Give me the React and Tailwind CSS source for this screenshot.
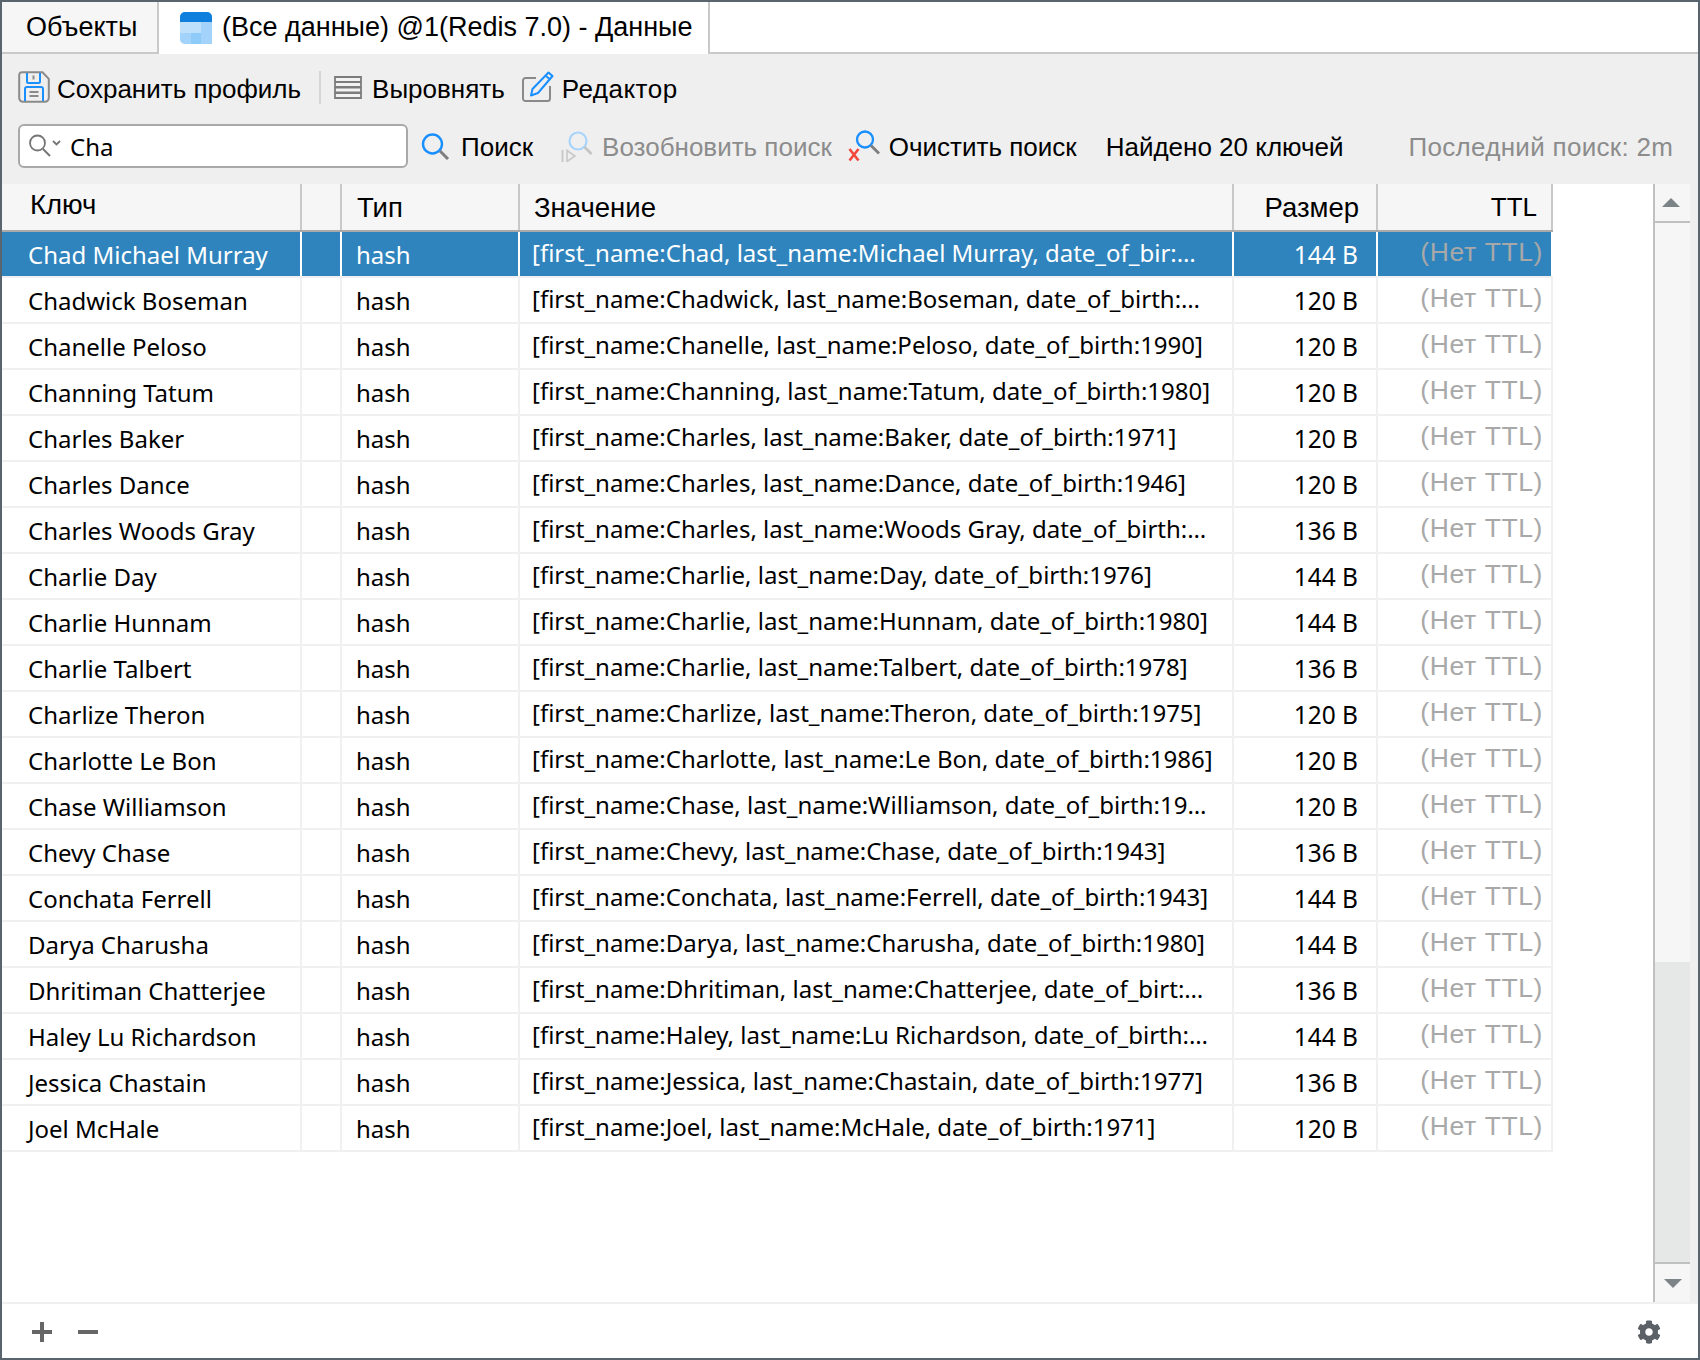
import React from "react";
import { FaCog } from "react-icons/fa";

const rows = [
  ["Chad Michael Murray", "[first_name:Chad, last_name:Michael Murray, date_of_bir:…", "144 B"],
  ["Chadwick Boseman", "[first_name:Chadwick, last_name:Boseman, date_of_birth:…", "120 B"],
  ["Chanelle Peloso", "[first_name:Chanelle, last_name:Peloso, date_of_birth:1990]", "120 B"],
  ["Channing Tatum", "[first_name:Channing, last_name:Tatum, date_of_birth:1980]", "120 B"],
  ["Charles Baker", "[first_name:Charles, last_name:Baker, date_of_birth:1971]", "120 B"],
  ["Charles Dance", "[first_name:Charles, last_name:Dance, date_of_birth:1946]", "120 B"],
  ["Charles Woods Gray", "[first_name:Charles, last_name:Woods Gray, date_of_birth:…", "136 B"],
  ["Charlie Day", "[first_name:Charlie, last_name:Day, date_of_birth:1976]", "144 B"],
  ["Charlie Hunnam", "[first_name:Charlie, last_name:Hunnam, date_of_birth:1980]", "144 B"],
  ["Charlie Talbert", "[first_name:Charlie, last_name:Talbert, date_of_birth:1978]", "136 B"],
  ["Charlize Theron", "[first_name:Charlize, last_name:Theron, date_of_birth:1975]", "120 B"],
  ["Charlotte Le Bon", "[first_name:Charlotte, last_name:Le Bon, date_of_birth:1986]", "120 B"],
  ["Chase Williamson", "[first_name:Chase, last_name:Williamson, date_of_birth:19…", "120 B"],
  ["Chevy Chase", "[first_name:Chevy, last_name:Chase, date_of_birth:1943]", "136 B"],
  ["Conchata Ferrell", "[first_name:Conchata, last_name:Ferrell, date_of_birth:1943]", "144 B"],
  ["Darya Charusha", "[first_name:Darya, last_name:Charusha, date_of_birth:1980]", "144 B"],
  ["Dhritiman Chatterjee", "[first_name:Dhritiman, last_name:Chatterjee, date_of_birt:…", "136 B"],
  ["Haley Lu Richardson", "[first_name:Haley, last_name:Lu Richardson, date_of_birth:…", "144 B"],
  ["Jessica Chastain", "[first_name:Jessica, last_name:Chastain, date_of_birth:1977]", "136 B"],
  ["Joel McHale", "[first_name:Joel, last_name:McHale, date_of_birth:1971]", "120 B"],
];

const TableIcon = () => (
  <svg width="32" height="32" viewBox="0 0 32 32" className="shrink-0">
    <rect width="32" height="32" rx="5" fill="#bfe0fb" />
    <path d="M0 10V5a5 5 0 0 1 5-5h22a5 5 0 0 1 5 5v5z" fill="#0e7fdc" />
    <rect x="21" y="10" width="11" height="22" fill="#a3d3fa" />
    <path d="M0 21h32v6a5 5 0 0 1-5 5H5a5 5 0 0 1-5-5z" fill="#a3d3fa" />
    <rect x="11" y="21" width="10" height="11" fill="#8ecbf9" />
  </svg>
);

const SaveIcon = () => (
  <svg width="32" height="32" viewBox="0 0 32 32" fill="none" className="shrink-0">
    <path d="M4 1.2h20.5l6.3 6.6V27a3.8 3.8 0 0 1-3.8 3.8H5A3.8 3.8 0 0 1 1.2 27V4A2.800 2.800 0 0 1 4 1.200z" stroke="#8a8a8a" strokeWidth="2" />
    <path d="M9 2v8.500a1.500 1.500 0 0 0 1.500 1.500h10a1.500 1.500 0 0 0 1.500-1.500V2" stroke="#1a8fff" strokeWidth="2" />
    <path d="M15.500 4.500v4" stroke="#8a8a8a" strokeWidth="2" />
    <path d="M7 30V18a2 2 0 0 1 2-2h14a2 2 0 0 1 2 2v12" stroke="#1a8fff" strokeWidth="2" />
    <path d="M11.500 21h9M11.500 25h9" stroke="#8a8a8a" strokeWidth="2" />
  </svg>
);

const AlignIcon = () => (
  <svg width="28" height="23" viewBox="0 0 28 23" fill="none" className="shrink-0">
    <path d="M1 1h26v5H1zM1 6h26v5H1zM1 11.500h26v5H1zM1 17h26v5H1z" stroke="#7c7c7c" strokeWidth="1.800" fill="#f2f2f2" />
  </svg>
);

const EditIcon = () => (
  <svg width="32" height="32" viewBox="0 0 32 32" fill="none" className="shrink-0">
    <path d="M14 7H3.500A2.500 2.500 0 0 0 1 9.500v18A2.500 2.500 0 0 0 3.500 30h22a2.500 2.500 0 0 0 2.500-2.500V15" stroke="#8a8a8a" strokeWidth="2" />
    <path d="M26.500 1.500l4 3.500L16 22l-7 2.500 1.500-6.500z" stroke="#1a8fff" strokeWidth="2" strokeLinejoin="round" />
    <path d="M24 5l4 3.500" stroke="#1a8fff" strokeWidth="2" />
  </svg>
);

const SearchBlue = () => (
  <svg width="29" height="27" viewBox="0 0 29 27" fill="none" className="shrink-0">
    <circle cx="11.500" cy="11" r="9.500" stroke="#1a8fff" strokeWidth="2.400" />
    <path d="M19 18l8 8" stroke="#7e7e7e" strokeWidth="3" />
  </svg>
);

const ResumeIcon = () => (
  <svg width="32" height="32" viewBox="0 0 32 32" fill="none" className="shrink-0">
    <circle cx="17" cy="11" r="8.500" stroke="#a8d4fb" strokeWidth="2.200" />
    <path d="M23.500 17l7 7" stroke="#c4c4c4" strokeWidth="2.600" />
    <path d="M1.500 20v12" stroke="#c8c8c8" strokeWidth="2" />
    <path d="M6 20.500l8 5.500-8 5.500z" stroke="#c8c8c8" strokeWidth="1.600" />
  </svg>
);

const ClearIcon = () => (
  <svg width="32" height="32" viewBox="0 0 32 32" fill="none" className="shrink-0">
    <circle cx="17" cy="9.500" r="8" stroke="#1a8fff" strokeWidth="2.300" />
    <path d="M23 15.500l8 8" stroke="#7e7e7e" strokeWidth="2.800" />
    <path d="M1.500 19l9 11.500M10.500 19l-9 11.500" stroke="#f5483c" strokeWidth="2.600" />
  </svg>
);

const InputSearchIcon = () => (
  <svg width="33" height="24" viewBox="0 0 33 24" fill="none" className="shrink-0">
    <circle cx="9.500" cy="9" r="7.500" stroke="#757575" strokeWidth="1.800" />
    <path d="M15 15l7 7" stroke="#757575" strokeWidth="2" />
    <path d="M25 7l3.500 3.500L32 7" stroke="#757575" strokeWidth="1.800" />
  </svg>
);

const grid = "grid grid-cols-[300px_40px_178px_714px_144px_175px] w-[1551px]";

export default function App() {
  return (
    <div className="w-[1700px] h-[1360px] border-2 border-[#59656e] bg-white flex flex-col font-['Liberation_Sans',sans-serif] text-[26px] text-black overflow-hidden">
      <div className="h-[52px] flex bg-white shrink-0 text-[27px]">
        <div className="w-[157px] bg-[#f6f6f6] border-b-2 border-r-2 border-[#c9c9c9] flex items-center pl-[24px]">Объекты</div>
        <div className="w-[551px] border-r-2 border-[#c9c9c9] flex items-center pl-[21px] gap-[10px]">
          <TableIcon />
          <span className="pb-[2px]">(Все данные) @1(Redis 7.0) - Данные</span>
        </div>
        <div className="flex-1 border-b-2 border-[#c9c9c9]"></div>
      </div>

      <div className="h-[130px] bg-[#efefef] shrink-0 pl-[16px] pt-[17px] flex flex-col">
        <div className="h-[32px] flex items-center">
          <SaveIcon />
          <span className="ml-[7px] pt-[4px]">Сохранить профиль</span>
          <div className="ml-[18px] w-[2px] h-[33px] bg-[#d6d6d6]"></div>
          <div className="ml-[13px]"><AlignIcon /></div>
          <span className="ml-[10px] pt-[4px]">Выровнять</span>
          <div className="ml-[17px]"><EditIcon /></div>
          <span className="ml-[8px] pt-[4px] tracking-[0.5px]">Редактор</span>
        </div>
        <div className="h-[44px] mt-[21px] flex items-center">
          <div className="w-[390px] h-[44px] bg-white border-2 border-[#a9a9a9] rounded-[6px] flex items-center pl-[8px] shrink-0">
            <InputSearchIcon />
            <span className="ml-[9px] pt-[2px] font-['Noto_Sans',sans-serif] text-[24px]">Cha</span>
          </div>
          <div className="ml-[13px]"><SearchBlue /></div>
          <span className="ml-[11px] pt-[2px]">Поиск</span>
          <div className="ml-[28px]"><ResumeIcon /></div>
          <span className="ml-[9px] pt-[2px] text-[#8c8c8c]">Возобновить поиск</span>
          <div className="ml-[16px]"><ClearIcon /></div>
          <span className="ml-[9px] pt-[2px]">Очистить поиск</span>
          <span className="ml-[29px] pt-[2px]">Найдено 20 ключей</span>
          <span className="ml-[65px] pt-[2px] text-[#8c8c8c] tracking-[0.3px]">Последний поиск: 2m</span>
        </div>
      </div>

      <div className="flex-1 min-h-0 flex">
        <div className="w-[1651px] shrink-0">
          <div className={`${grid} h-[48px] bg-[#f6f6f6] border-b-2 border-[#a9a9a9] text-[27.5px]`}>
            <div className="border-r-2 border-[#c9c9c9] pl-[28px] pb-[4px] flex items-center">Ключ</div>
            <div className="border-r-2 border-[#c9c9c9]"></div>
            <div className="border-r-2 border-[#c9c9c9] pl-[15px] pt-[1px] flex items-center">Тип</div>
            <div className="border-r-2 border-[#c9c9c9] pl-[14px] pt-[1px] flex items-center">Значение</div>
            <div className="border-r-2 border-[#c9c9c9] pr-[17px] pt-[1px] flex items-center justify-end">Размер</div>
            <div className="border-r-2 border-[#c9c9c9] pr-[14px] pt-[1px] flex items-center justify-end text-[26px]">TTL</div>
          </div>
          {rows.map(([k, v, s], i) => {
            const sel = i === 0;
            const line = sel ? "border-white" : "border-[#f0f0f0]";
            return (
              <div key={k} className={`${grid} h-[46px] border-b-2 ${sel ? "bg-[#2f84bd] text-white border-[#f0f0f0]" : "border-[#f0f0f0]"} font-['Noto_Sans',sans-serif] text-[24px]`}>
                <div className={`border-r-2 ${line} pl-[26px] pt-[2px] flex items-center whitespace-nowrap`}>{k}</div>
                <div className={`border-r-2 ${line}`}></div>
                <div className={`border-r-2 ${line} pl-[14px] pt-[2px] flex items-center`}>hash</div>
                <div className={`border-r-2 ${line} pl-[12px] pb-[2px] flex items-center whitespace-nowrap overflow-hidden`}>{v}</div>
                <div className={`border-r-2 ${line} pr-[18px] pt-[2px] flex items-center justify-end text-[24.5px]`}>{s}</div>
                <div className={`border-r-2 ${line} pr-[8px] pb-[2px] flex items-center justify-end font-['Liberation_Sans',sans-serif] text-[26.5px] tracking-[0.6px] text-[#a8a8a8]`}>(Нет TTL)</div>
              </div>
            );
          })}
        </div>
        <div className="w-[37px] shrink-0 border-l-2 border-[#c0c0c0] flex flex-col">
          <div className="h-[39px] bg-[#f6f6f6] border-b-2 border-[#c0c0c0] flex items-center justify-center pr-[3px]">
            <div className="w-0 h-0 border-x-[9px] border-x-transparent border-b-[9px] border-b-[#7d8487]"></div>
          </div>
          <div className="h-[739px] bg-[#f6f6f6]"></div>
          <div className="flex-1 bg-[#e6e7e7]"></div>
          <div className="h-[40px] bg-[#f6f6f6] border-t-2 border-[#c0c0c0] flex items-center justify-center">
            <div className="w-0 h-0 border-x-[9px] border-x-transparent border-t-[9px] border-t-[#7d8487]"></div>
          </div>
        </div>
        <div className="flex-1 bg-[#efefef]"></div>
      </div>

      <div className="h-[56px] shrink-0 border-t-2 border-[#f0f0f0] flex items-center pl-[30px] pr-[37px] pt-[2px]">
        <div className="relative w-[20px] h-[20px]">
          <div className="absolute left-0 right-0 top-[8px] h-[4px] bg-[#666666]"></div>
          <div className="absolute top-0 bottom-0 left-[8px] w-[4px] bg-[#666666]"></div>
        </div>
        <div className="ml-[26px] w-[20px] h-[4px] bg-[#666666]"></div>
        <FaCog className="ml-auto text-[#5b6166]" size={24} />
      </div>
    </div>
  );
}
